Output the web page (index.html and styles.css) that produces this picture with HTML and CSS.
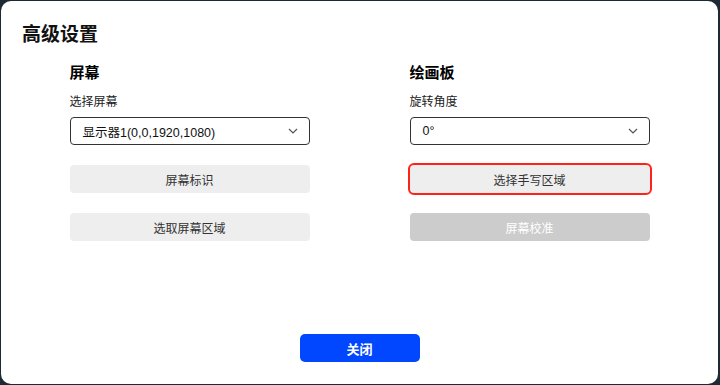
FILE: index.html
```html
<!DOCTYPE html>
<html lang="zh-CN">
<head>
    <meta charset="UTF-8">
    <meta name="viewport" content="width=device-width, initial-scale=1.0">
    <title>高级设置</title>
    <link rel="stylesheet" href="styles.css">
</head>
<body>
    <div class="dialog">
        <h2 class="title">高级设置</h2>

        <div class="columns">
            <div class="column">
                <h3>屏幕</h3>
                <label>选择屏幕</label>
                <div class="select">
                    <span>显示器1(0,0,1920,1080)</span>
                    <svg class="chevron" width="10" height="6" viewBox="0 0 10 6"><path d="M1 1l4 4 4-4" fill="none" stroke="#555" stroke-width="1.2"/></svg>
                </div>
                <button class="btn">屏幕标识</button>
                <button class="btn">选取屏幕区域</button>
            </div>

            <div class="column">
                <h3>绘画板</h3>
                <label>旋转角度</label>
                <div class="select">
                    <span>0°</span>
                    <svg class="chevron" width="10" height="6" viewBox="0 0 10 6"><path d="M1 1l4 4 4-4" fill="none" stroke="#555" stroke-width="1.2"/></svg>
                </div>
                <button class="btn active">选择手写区域</button>
                <button class="btn" disabled>屏幕校准</button>
            </div>
        </div>

        <div class="footer">
            <button class="btn-close">关闭</button>
        </div>
    </div>
</body>
</html>
```

FILE: styles.css
```css
body {
    margin: 0;
    background-color: #1f2933;
    font-family: "Noto Sans CJK SC", "Liberation Sans", sans-serif;
    color: #222;
}
.dialog {
    margin: 1px 2px 1px 1px;
    height: 383px;
    background: white;
    border-radius: 10px;
    display: flex;
    flex-direction: column;
    box-sizing: border-box;
}
.title {
    margin: 0;
    padding: 19px 0 0 21px;
    font-size: 19px;
    line-height: 26px;
    font-weight: bold;
    color: #111;
}
.columns {
    display: flex;
    justify-content: center;
    gap: 100px;
    margin-top: 15px;
}
.column {
    width: 240px;
    display: flex;
    flex-direction: column;
}
.column h3 {
    margin: 0;
    font-size: 15px;
    line-height: 22px;
    font-weight: bold;
    color: #000;
}
.column label {
    margin-top: 9px;
    font-size: 12px;
    line-height: 18px;
    color: #222;
}
.select {
    margin-top: 7px;
    height: 28px;
    border: 1px solid #333;
    border-radius: 4px;
    box-sizing: border-box;
    display: flex;
    align-items: center;
    justify-content: space-between;
    padding: 0 11px 0 12px;
    font-family: "Liberation Sans", "Noto Sans CJK SC", sans-serif;
    font-size: 12.5px;
    color: #111;
}
.btn {
    margin-top: 20px;
    height: 28px;
    border: none;
    border-radius: 4px;
    background-color: #eeeeee;
    font-family: "Noto Sans CJK SC", sans-serif;
    font-size: 12px;
    color: #333;
    padding: 0;
}
.btn.active {
    outline: 2px solid #ff2218;
    outline-offset: 0;
}
.btn:disabled {
    background-color: #cccccc;
    color: #fff;
}
.footer {
    margin-top: auto;
    display: flex;
    justify-content: center;
    padding-bottom: 22px;
}
.btn-close {
    width: 120px;
    height: 28px;
    border: none;
    border-radius: 5px;
    background-color: #0047ff;
    color: white;
    font-family: "Noto Sans CJK SC", sans-serif;
    font-size: 13px;
    font-weight: bold;
}
```
